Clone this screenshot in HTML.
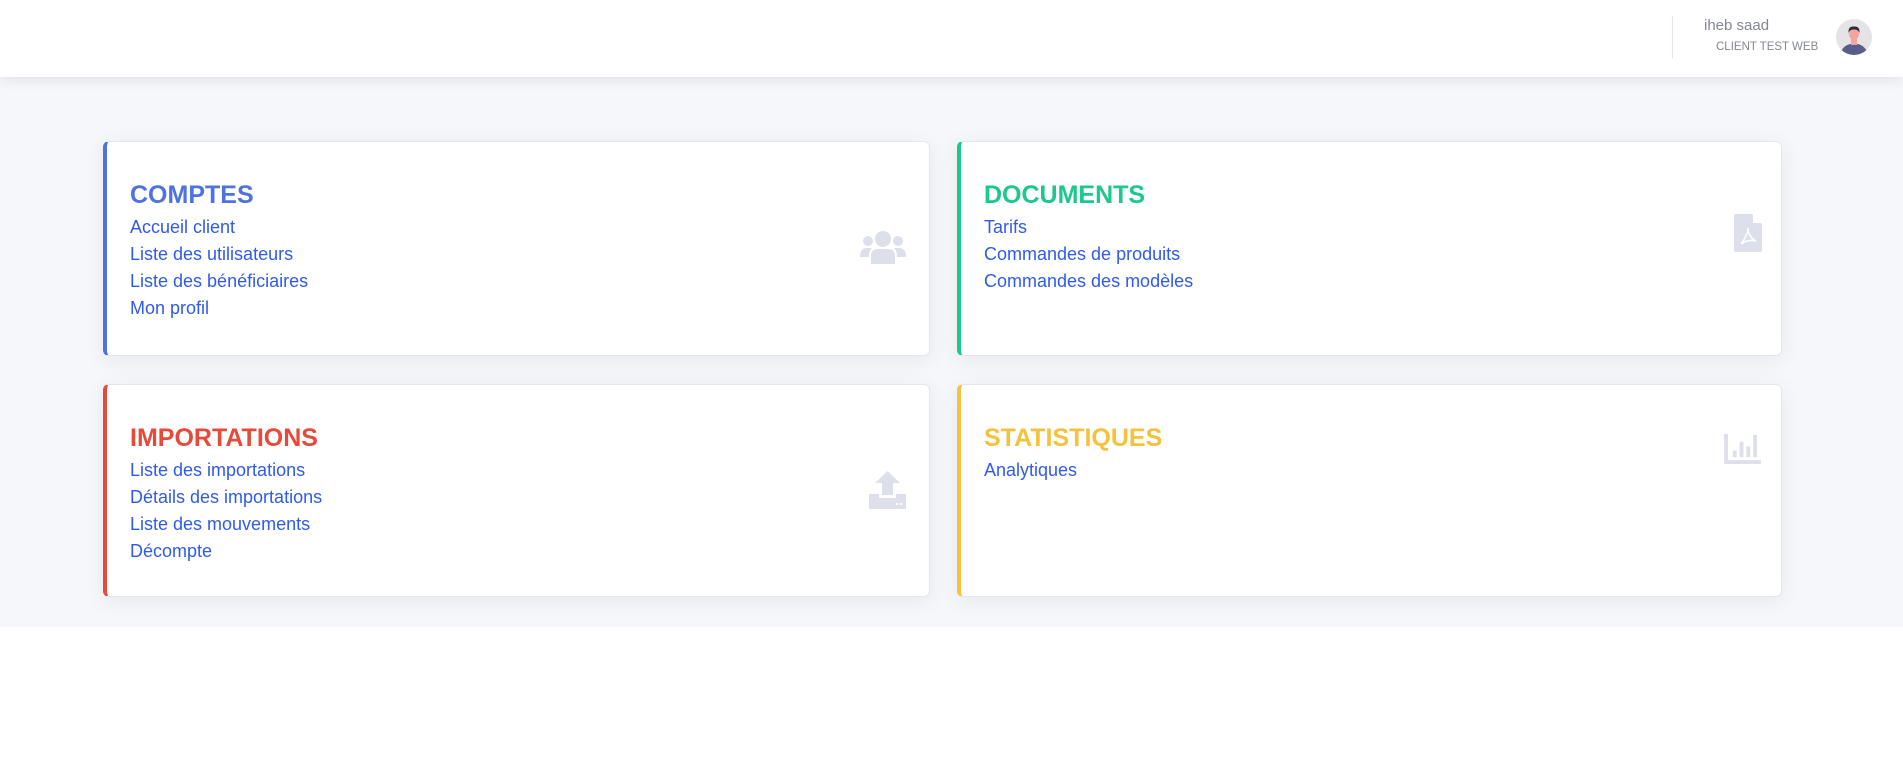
<!DOCTYPE html>
<html><head><meta charset="utf-8"><style>
*{margin:0;padding:0;box-sizing:border-box}
body{width:1903px;height:761px;background:#fff;font-family:"Liberation Sans",sans-serif;position:relative;overflow:hidden}
.hdr{position:absolute;left:0;top:0;width:1903px;height:77px;background:#fff;box-shadow:0 2px 12px rgba(58,59,69,.12);z-index:2}
.main{position:absolute;left:0;top:77px;width:1903px;height:550px;background:#f6f7fb}
.card{position:absolute;background:#fff;border:1px solid #e3e6f0;border-radius:6px;box-shadow:0 4px 20px rgba(58,59,69,.08);padding:0 0 0 23px}
.card h2{font-size:25px;font-weight:bold;margin-top:37px;line-height:32px;margin-bottom:3px}
.card a{display:block;color:#2f5bea;font-size:18px;line-height:27px;text-decoration:none}
.ic{position:absolute}
</style></head><body>
<div class="hdr">
<div style="position:absolute;left:1672px;top:16px;width:1px;height:42px;background:#e3e6f0"></div>
<div style="position:absolute;left:1704px;top:17px;font-size:15px;color:#858796">iheb saad</div>
<div style="position:absolute;left:1716px;top:41px;font-size:11.5px;color:#858796">CLIENT TEST WEB</div>
<svg style="position:absolute;left:1836px;top:19px" width="36" height="36" viewBox="0 0 36 36">
<clipPath id="c"><circle cx="18" cy="18" r="18"/></clipPath>
<g clip-path="url(#c)"><rect width="36" height="36" fill="#e4e4e7"/>
<path d="M4 36 Q6 27 14 25 L22 25 Q30 27 32 36Z" fill="#5a5c8a"/>
<rect x="15" y="20" width="6" height="6" fill="#f4a3a0"/>
<ellipse cx="18" cy="15" rx="5" ry="6" fill="#f4a3a0"/>
<path d="M12.5 14 Q12 7 18 7.5 Q24 7 23.5 14 Q22 10 18 10.5 Q14 10 12.5 14Z" fill="#2b2b3a"/></g></svg>
</div>
<div class="main"></div>

<div class="card" style="left:103px;top:141px;width:827px;height:215px;border-left:4px solid #4e73df">
<h2 style="color:#4e73df">COMPTES</h2>
<a>Accueil client</a><a>Liste des utilisateurs</a><a>Liste des bénéficiaires</a><a>Mon profil</a>
<svg class="ic" style="left:753px;top:88px" width="46" height="34" viewBox="0 0 46 34" fill="#dddfeb">
<circle cx="23" cy="9" r="8"/><circle cx="8" cy="11" r="5"/><circle cx="38" cy="11" r="5"/>
<path d="M11 34 L11 26 Q11 19 18 19 L28 19 Q35 19 35 26 L35 34Z"/>
<path d="M0 27 Q0 18 7 18 L12 18 Q9 21 9 26 L9 27Z"/><path d="M46 27 Q46 18 39 18 L34 18 Q37 21 37 26 L37 27Z"/></svg>
</div>

<div class="card" style="left:957px;top:141px;width:825px;height:215px;border-left:4px solid #1cc88a">
<h2 style="color:#1cc88a">DOCUMENTS</h2>
<a>Tarifs</a><a>Commandes de produits</a><a>Commandes des modèles</a>
<svg class="ic" style="left:773px;top:72px" width="28" height="38" viewBox="0 0 28 38">
<path d="M2 0 L18 0 L28 10 L28 36 Q28 38 26 38 L2 38 Q0 38 0 36 L0 2 Q0 0 2 0Z" fill="#dddfeb"/>
<path d="M19 0 L28 9 L19 9Z" fill="#fff"/>
<path d="M7 30 Q11 25 14 17 Q14 12 14 17 Q17 25 22 27 Q14 25 7 30" fill="none" stroke="#fff" stroke-width="1.6"/></svg>
</div>

<div class="card" style="left:103px;top:384px;width:827px;height:213px;border-left:4px solid #e74a3b">
<h2 style="color:#e74a3b">IMPORTATIONS</h2>
<a>Liste des importations</a><a>Détails des importations</a><a>Liste des mouvements</a><a>Décompte</a>
<svg class="ic" style="left:762px;top:86px" width="37" height="38" viewBox="0 0 37 38" fill="#dddfeb">
<path d="M18.5 0 L31 12 L24 12 L24 24 L13 24 L13 12 L6 12Z"/>
<path d="M0 23 L10 23 L10 27 L27 27 L27 23 L37 23 L37 38 L0 38Z"/>
<rect x="27" y="32" width="2" height="2" fill="#fff"/><rect x="31" y="32" width="2" height="2" fill="#fff"/></svg>
</div>

<div class="card" style="left:957px;top:384px;width:825px;height:213px;border-left:4px solid #f6c23e">
<h2 style="color:#f6c23e">STATISTIQUES</h2>
<a>Analytiques</a>
<svg class="ic" style="left:763px;top:49px" width="37" height="30" viewBox="0 0 38 31" fill="#dddfeb">
<path d="M0 0 L4 0 L4 27 L38 27 L38 31 L0 31Z"/>
<rect x="9" y="17" width="4" height="7"/><rect x="16" y="8" width="4" height="16"/><rect x="23" y="13" width="4" height="11"/><rect x="30" y="1" width="4" height="23"/></svg>
</div>
</body></html>
